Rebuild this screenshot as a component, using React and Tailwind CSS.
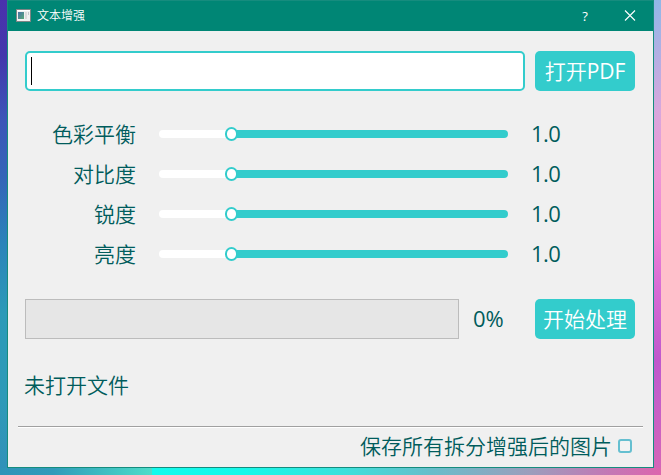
const adjustments = [
  { label: '色彩平衡', value: '1.0' },
  { label: '对比度', value: '1.0' },
  { label: '锐度', value: '1.0' },
  { label: '亮度', value: '1.0' },
];

function AppIcon() {
  return (
    <svg width="15" height="13" viewBox="0 0 15 13" className="-mt-px shrink-0">
      <defs>
        <linearGradient id="pane" x1="0" y1="0" x2="1" y2="1">
          <stop offset="0" stopColor="#4773a8" />
          <stop offset="1" stopColor="#58a878" />
        </linearGradient>
      </defs>
      <rect x="0.5" y="0.5" width="14" height="12" fill="#f1f1f1" stroke="#7d8585" />
      <rect x="1" y="1" width="13" height="1" fill="#ffffff" />
      <rect x="2" y="3" width="6" height="7" fill="url(#pane)" />
      <rect x="9" y="3" width="2" height="7" fill="#dcdcdc" />
      <rect x="12" y="3" width="1" height="3" fill="#c5c9cd" />
    </svg>
  );
}

function TitleBar() {
  return (
    <header className="flex h-[31px] shrink-0 items-center border-t border-[#168c7e] bg-[#008675] pl-2 font-normal text-white">
      <AppIcon />
      <h1 className="ml-[6px] flex-1 text-[12px] font-[350] leading-[30px]">文本增强</h1>
      <span className="w-[46px] pl-[2px] text-center text-[13px] leading-[27px]">?</span>
      <svg width="46" height="30" viewBox="0 0 46 30" fill="none" stroke="#fff" strokeWidth="1.1">
        <path d="M18 9.5 L28 19.5 M28 9.5 L18 19.5" />
      </svg>
    </header>
  );
}

function Slider() {
  return (
    <div className="flex h-[14px] w-[349px] items-center">
      <div className="h-2 w-[67px] rounded-l-full bg-white" />
      <div className="-mx-px h-[14px] w-[13px] shrink-0 rounded-full border-2 border-[#33cccc] bg-white" />
      <div className="h-2 flex-1 rounded-r-full bg-[#33cccc]" />
    </div>
  );
}

function ActionButton({ children }) {
  return (
    <button className="h-10 w-[100px] shrink-0 whitespace-nowrap rounded-[5px] bg-[#33cccc] text-center leading-10 text-white">
      {children}
    </button>
  );
}

export default function App() {
  return (
    <div className="flex h-[475px] w-[661px] flex-col overflow-hidden font-['Open_Sans','Noto_Sans_CJK_SC',sans-serif] text-[21px] font-[350] text-[#005c5c]">
      <div className="flex h-[468px] shrink-0">
        <div className="w-[7px] bg-[linear-gradient(180deg,#4a31ad_0%,#4337ac_12%,#3c55b8_25%,#3465b8_38%,#2b83ba_52%,#2b9ab8_67%,#2e9ab8_85%,#3191b9_100%)]" />
        <main className="flex w-[647px] flex-col border border-t-0 border-[#168c7e] bg-[#f0f0f0]">
          <TitleBar />
          <div className="mt-5 flex gap-[10px] pl-[17px]">
            <div className="flex h-10 w-[500px] items-center rounded-[5px] border-2 border-[#33cccc] bg-white pl-1">
              <div className="h-7 w-px bg-black" />
            </div>
            <ActionButton>
              打开<span className="font-normal">PDF</span>
            </ActionButton>
          </div>
          <div className="mt-[23px] flex flex-col">
            {adjustments.map(({ label, value }) => (
              <div key={label} className="flex h-10 items-center">
                <span className="mr-[23px] w-32 text-right leading-[39px]">{label}</span>
                <Slider />
                <span className="-mt-[2px] ml-[23px] text-[22px] font-normal leading-[38px] tracking-[-0.6px]">{value}</span>
              </div>
            ))}
          </div>
          <div className="mt-[25px] flex pl-[17px]">
            <div className="h-10 w-[434px] border border-[#bcbcbc] bg-[#e6e6e6]" />
            <span className="ml-[14px] w-[62px] text-[22px] font-normal leading-[39px] tracking-[-0.1px]">0%</span>
            <ActionButton>开始处理</ActionButton>
          </div>
          <p className="mt-[26px] pl-4 leading-10">未打开文件</p>
          <div className="mx-[10px] mt-[21px] h-[2px] border-t border-b border-t-[#a0a0a0] border-b-white" />
          <label className="flex h-9 items-center justify-end gap-[6px] pr-[21px]">
            <span className="leading-9">保存所有拆分增强后的图片</span>
            <span className="h-[14px] w-[14px] rounded-[3px] border-2 border-[#65bfd0] bg-[#f3f3f3]" />
          </label>
        </main>
        <div className="w-[7px] bg-[linear-gradient(175deg,#90b8e8_0%,#b4afe3_12%,#d9a7dc_24%,#ed96d5_38%,#ee83d3_50%,#d86dd5_61%,#bf58cc_77%,#c35fca_84%,#d565b7_100%)]" />
      </div>
      <div className="flex h-[7px]">
        <div className="w-[152px] bg-[linear-gradient(90deg,#2f94b8_0%,#319bba_35%,#43c9c4_80%,#4edcc9_100%)]" />
        <div className="flex-1 bg-[linear-gradient(90deg,#13faec_0%,#16f8e9_18%,#3de0db_38%,#68bdca_55%,#9b9ebc_74%,#c477b5_90%,#dc65ae_100%)]" />
      </div>
    </div>
  );
}
